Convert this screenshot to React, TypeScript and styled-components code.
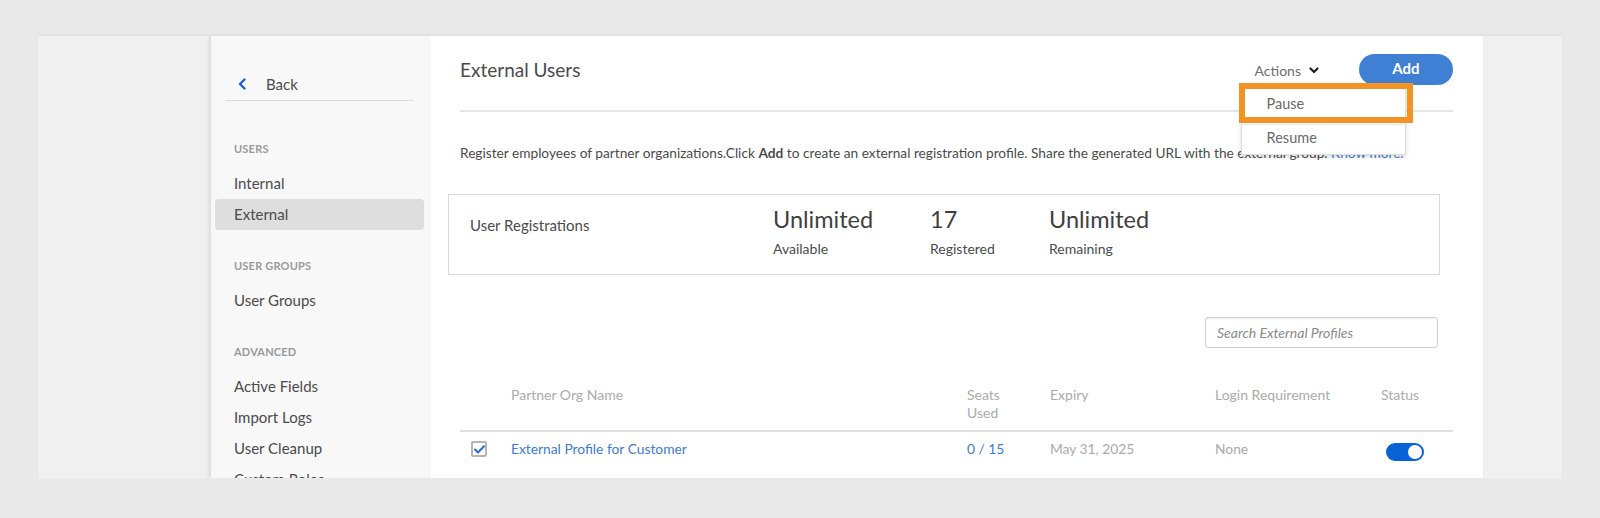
import React from "react";
import styled, { createGlobalStyle } from "styled-components";

const Global = createGlobalStyle`
  html, body { margin: 0; padding: 0; }
  body {
    background: #e9e9e9;
    font-family: Lato, "Open Sans", Arial, sans-serif;
    color: #4b4b4b;
  }
  * { box-sizing: border-box; }
`;

const Frame = styled.div`
  margin: 36px 0 0 38px;
  width: 1524px;
  height: 442px;
  overflow: hidden;
  display: flex;
  box-shadow: 0 -1px 2px rgba(0, 0, 0, 0.06);
`;

const Gutter = styled.div<{ $w: number }>`
  flex: 0 0 ${(p) => p.$w}px;
  background: #f0f0f0;
`;

const Sidebar = styled.nav`
  flex: 0 0 218px;
  background: #f8f8f8;
  box-shadow: -2px 0 4px rgba(0, 0, 0, 0.1), 1px 0 2px rgba(0, 0, 0, 0.04);
  position: relative;
  z-index: 1;
`;

const BackRow = styled.div`
  margin: 32px 15px 0 14px;
  height: 33px;
  border-bottom: 1px solid #dcdcdc;
  display: flex;
  align-items: center;
  padding: 0 0 1px 13px;
  font-size: 15px;
  color: #4b4b4b;
  gap: 19px;
`;

const Section = styled.div<{ $top: number }>`
  margin-top: ${(p) => p.$top}px;
`;

const SectionTitle = styled.div`
  height: 16px;
  line-height: 16px;
  margin: 0 0 11px 23px;
  font-size: 11px;
  font-weight: 700;
  color: #9a9a9a;
  letter-spacing: 0.2px;
`;

const NavItem = styled.div<{ $active?: boolean }>`
  height: 31px;
  line-height: 31px;
  margin: 0 5px 0 4px;
  padding-left: 19px;
  font-size: 15px;
  color: #4b4b4b;
  border-radius: 4px;
  background: ${(p) => (p.$active ? "#dedede" : "transparent")};
`;

const Main = styled.main`
  flex: 0 0 1054px;
  background: #ffffff;
  padding: 18px 30px 0 31px;
`;

const Header = styled.header`
  display: flex;
  align-items: center;
  padding-bottom: 25px;
  border-bottom: 2px solid #e6e6e6;
`;

const Title = styled.h1`
  margin: 0;
  flex: 1;
  font-size: 19px;
  font-weight: 400;
  color: #4b4b4b;
`;

const ActionsWrap = styled.div`
  position: relative;
  height: 31px;
  display: flex;
  align-items: center;
  gap: 8px;
  margin-right: 40px;
  font-size: 14px;
  color: #6e6e6e;
  padding-top: 2px;
`;

const Menu = styled.div`
  position: absolute;
  top: 29px;
  left: -14px;
  width: 165px;
  background: #fff;
  border: 1px solid #dedede;
  box-shadow: 0 2px 4px rgba(0, 0, 0, 0.14);
  z-index: 5;
`;

const MenuItem = styled.div<{ $first?: boolean }>`
  height: ${(p) => (p.$first ? 40 : 30)}px;
  line-height: ${(p) => (p.$first ? 40 : 25)}px;
  padding-left: 25px;
  font-size: 14.5px;
  color: #6a6a6a;
  border-top: ${(p) => (p.$first ? "none" : "1px solid #e8e8e8")};
`;

const Highlight = styled.div`
  position: absolute;
  top: -1px;
  left: -3px;
  width: 174px;
  height: 40px;
  border: 6px solid #f39323;
  pointer-events: none;
`;

const AddButton = styled.button`
  width: 94px;
  height: 31px;
  border: none;
  border-radius: 16px;
  background: #3f80d4;
  color: #fff;
  font-family: inherit;
  font-size: 15px;
  font-weight: 700;
  padding: 0 0 3px;
`;

const Intro = styled.p`
  margin: 31px 0 0;
  font-size: 13.7px;
  line-height: 20px;
  color: #4b4b4b;
  white-space: nowrap;
`;

const Link = styled.a`
  color: #3f80d4;
  text-decoration: none;
`;

const StatsBox = styled.section`
  margin: 31px 0 0 -12px;
  width: 992px;
  height: 81px;
  border: 1px solid #d9d9d9;
  display: grid;
  grid-template-columns: 303px 157px 119px 1fr;
  padding-left: 21px;
`;

const StatsLabel = styled.div`
  padding-top: 20px;
  font-size: 15px;
  line-height: 20px;
  color: #4b4b4b;
`;

const Stat = styled.div`
  padding-top: 8px;
`;

const StatValue = styled.div`
  font-size: 23.5px;
  line-height: 32px;
  color: #3f3f3f;
`;

const StatCaption = styled.div`
  margin-top: 4px;
  font-size: 14px;
  line-height: 20px;
  color: #4b4b4b;
`;

const SearchRow = styled.div`
  width: 990px;
  margin: 42px 0 0 -12px;
  display: flex;
  justify-content: flex-end;
`;

const SearchInput = styled.input`
  width: 233px;
  height: 31px;
  border: 1px solid #cfcfcf;
  border-radius: 3px;
  box-shadow: inset 0 1px 2px rgba(0, 0, 0, 0.06);
  padding: 0 0 0 11px;
  font-family: inherit;
  font-size: 14px;
  font-style: italic;
  color: #4b4b4b;
  &::placeholder {
    color: #8a8a8a;
    font-style: italic;
  }
`;

const Grid = styled.div`
  display: grid;
  grid-template-columns: 51px 456px 83px 165px 166px 1fr;
`;

const HeadRow = styled(Grid)`
  margin-top: 38px;
  padding-bottom: 8px;
  border-bottom: 2px solid #e0e0e0;
`;

const HeadCell = styled.div<{ $narrow?: boolean }>`
  font-size: 14px;
  line-height: 18px;
  color: #ababab;
  max-width: ${(p) => (p.$narrow ? "40px" : "none")};
`;

const BodyRow = styled(Grid)`
  padding-top: 8px;
  align-items: start;
`;

const Cell = styled.div<{ $tone?: "link" | "muted" }>`
  font-size: 13.8px;
  line-height: 18px;
  color: ${(p) => (p.$tone === "link" ? "#3d7cd1" : p.$tone === "muted" ? "#a9a9a9" : "#4b4b4b")};
`;

const CheckCell = styled.div`
  padding: 1px 0 0 11px;
`;

const Checkbox = styled.span`
  display: flex;
  align-items: center;
  justify-content: center;
  width: 16px;
  height: 16px;
  border: 2px solid #b4b4b4;
  border-radius: 2px;
  background: #fff;
`;

const Toggle = styled.span`
  display: block;
  margin: 3px 0 0 5px;
  width: 38px;
  height: 18px;
  border-radius: 9px;
  background: #0a63d6;
  position: relative;
  &::after {
    content: "";
    position: absolute;
    right: 2px;
    top: 2px;
    width: 14px;
    height: 14px;
    border-radius: 50%;
    background: #fff;
  }
`;

const ChevronLeft = () => (
  <svg width="9" height="12" viewBox="0 0 9 12" aria-hidden>
    <polyline points="6.5,1.5 2,6 6.5,10.5" fill="none" stroke="#1d5fcf" strokeWidth="2.4" strokeLinecap="round" strokeLinejoin="round" />
  </svg>
);

const ChevronDown = () => (
  <svg width="10" height="7" viewBox="0 0 10 7" aria-hidden>
    <polyline points="1.5,1.5 5,5 8.5,1.5" fill="none" stroke="#222" strokeWidth="2.2" strokeLinecap="round" strokeLinejoin="round" />
  </svg>
);

const Check = () => (
  <svg width="11" height="9" viewBox="0 0 11 9" aria-hidden>
    <polyline points="1,4.5 4,7.5 10,1.3" fill="none" stroke="#2a6fd0" strokeWidth="2" strokeLinecap="round" strokeLinejoin="round" />
  </svg>
);

export default function App() {
  return (
    <>
      <Global />
      <Frame>
        <Gutter $w={173} />
        <Sidebar>
          <BackRow>
            <ChevronLeft />
            <span>Back</span>
          </BackRow>
          <Section $top={40}>
            <SectionTitle>USERS</SectionTitle>
            <NavItem>Internal</NavItem>
            <NavItem $active>External</NavItem>
          </Section>
          <Section $top={28}>
            <SectionTitle>USER GROUPS</SectionTitle>
            <NavItem>User Groups</NavItem>
          </Section>
          <Section $top={28}>
            <SectionTitle>ADVANCED</SectionTitle>
            <NavItem>Active Fields</NavItem>
            <NavItem>Import Logs</NavItem>
            <NavItem>User Cleanup</NavItem>
            <NavItem>Custom Roles</NavItem>
          </Section>
        </Sidebar>
        <Main>
          <Header>
            <Title>External Users</Title>
            <ActionsWrap>
              <span>Actions</span>
              <ChevronDown />
              <Menu>
                <MenuItem $first>Pause</MenuItem>
                <MenuItem>Resume</MenuItem>
                <Highlight />
              </Menu>
            </ActionsWrap>
            <AddButton>Add</AddButton>
          </Header>
          <Intro>
            Register employees of partner organizations.Click <b>Add</b> to create an external registration profile. Share the generated URL with the external group. <Link>Know more.</Link>
          </Intro>
          <StatsBox>
            <StatsLabel>User Registrations</StatsLabel>
            <Stat>
              <StatValue>Unlimited</StatValue>
              <StatCaption>Available</StatCaption>
            </Stat>
            <Stat>
              <StatValue>17</StatValue>
              <StatCaption>Registered</StatCaption>
            </Stat>
            <Stat>
              <StatValue>Unlimited</StatValue>
              <StatCaption>Remaining</StatCaption>
            </Stat>
          </StatsBox>
          <SearchRow>
            <SearchInput placeholder="Search External Profiles" />
          </SearchRow>
          <HeadRow>
            <span />
            <HeadCell>Partner Org Name</HeadCell>
            <HeadCell $narrow>Seats Used</HeadCell>
            <HeadCell>Expiry</HeadCell>
            <HeadCell>Login Requirement</HeadCell>
            <HeadCell>Status</HeadCell>
          </HeadRow>
          <BodyRow>
            <CheckCell>
              <Checkbox>
                <Check />
              </Checkbox>
            </CheckCell>
            <Cell $tone="link">External Profile for Customer</Cell>
            <Cell $tone="link">0 / 15</Cell>
            <Cell $tone="muted">May 31, 2025</Cell>
            <Cell $tone="muted">None</Cell>
            <div>
              <Toggle />
            </div>
          </BodyRow>
        </Main>
        <Gutter $w={79} />
      </Frame>
    </>
  );
}
